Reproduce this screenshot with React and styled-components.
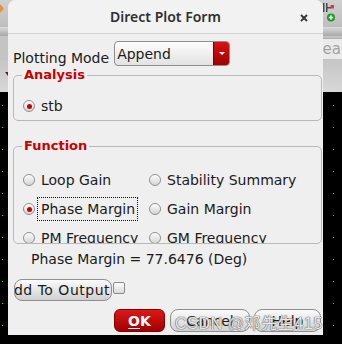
import React from 'react';
import styled, { createGlobalStyle } from 'styled-components';

const GlobalStyle = createGlobalStyle`
  html, body {
    margin: 0;
    padding: 0;
    background: #000;
  }
  body {
    font-family: 'DejaVu Sans', sans-serif;
  }
`;

const Stage = styled.div`
  position: relative;
  width: 342px;
  height: 344px;
  overflow: hidden;
  display: flex;
  flex-direction: column;
  background: #000;
`;

// desktop behind the dialog
const Toolbar = styled.div`
  height: 27px;
  background: linear-gradient(#d0d0d0, #bebebe);
  display: flex;
  justify-content: space-between;
`;

const Rule = styled.div`
  height: 9px;
  background: linear-gradient(#dadada, #a8a8a8);
`;

const SearchRow = styled.div`
  height: 24px;
  box-sizing: border-box;
  padding-top: 2px;
  background: #c4c4c4;
  display: flex;
  justify-content: flex-end;
`;

const SearchField = styled.div`
  width: 42px;
  height: 21px;
  box-sizing: border-box;
  padding-left: 13px;
  background: #ebebeb;
  border-top: 1px solid #b0b0b0;
  color: #a3a3a3;
  font: 15px/20px 'DejaVu Sans', sans-serif;
  white-space: nowrap;
  overflow: hidden;
`;

const Band = styled.div`
  height: 32px;
  background: linear-gradient(#c6c6c6, #d8d8d8);
  padding: 12px 0 0 5px;
  box-sizing: border-box;
`;

const Caret = styled.div`
  width: 0;
  height: 0;
  border-left: 3px solid transparent;
  border-right: 3px solid transparent;
  border-top: 4px solid #8a1010;
`;

const Canvas = styled.div`
  flex: 1;
  display: flex;
  justify-content: space-between;
  padding: 13px 8px 0 2px;
`;

const DotColumn = styled.div`
  width: 1px;
  background: repeating-linear-gradient(to bottom, #22dd22 0 1px, transparent 1px 22px);
`;

// the dialog window
const Dialog = styled.div`
  position: absolute;
  left: 8px;
  top: 0;
  width: 315px;
  height: 335px;
  background: #efefef;
  border-radius: 8px 8px 0 0;
  overflow: hidden;
  display: flex;
  flex-direction: column;
  color: #1b1b1b;
  font: 14px 'DejaVu Sans', sans-serif;
`;

const TitleBar = styled.div`
  height: 33px;
  background: #f2f2f2;
  border-bottom: 1px solid #d3d3d3;
  display: grid;
  grid-template-columns: 1fr auto 1fr;
  align-items: center;
`;

const Title = styled.div`
  grid-column: 2;
  font: 600 14px 'Noto Sans', sans-serif;
  color: #2f2f2f;
`;

const Close = styled.div`
  grid-column: 3;
  justify-self: end;
  margin: 3px 15px 0 0;
  display: flex;
`;

const Body = styled.div`
  padding: 0 1px 0 5px;
  display: flex;
  flex-direction: column;
`;

const PlotRow = styled.div`
  margin-top: 7px;
  display: flex;
  align-items: flex-end;
`;

const Label = styled.span`
  line-height: 16px;
  white-space: nowrap;
`;

const Select = styled.div`
  margin-left: 5px;
  width: 116px;
  height: 25px;
  box-sizing: border-box;
  border: 1px solid #8e8e8e;
  border-radius: 4px;
  background: linear-gradient(#fdfdfd, #e2e2e2);
  overflow: hidden;
  display: flex;
  align-items: center;
`;

const SelectValue = styled.span`
  flex: 1;
  padding-left: 2px;
`;

const SelectArrow = styled.span`
  align-self: stretch;
  width: 15px;
  background: linear-gradient(#d81414, #a00000);
  border-left: 1px solid #7d0000;
  display: flex;
  align-items: center;
  justify-content: center;
  &::after {
    content: '';
    border-left: 3px solid transparent;
    border-right: 3px solid transparent;
    border-top: 3px solid #fff;
  }
`;

const Group = styled.fieldset`
  margin: ${p => p.$gap}px 0 0;
  padding: 0 0 ${p => p.$pad}px 8px;
  height: ${p => p.$height}px;
  box-sizing: border-box;
  border: 1px solid #b9b9b9;
  border-radius: 5px;
  min-width: 0;
  overflow: hidden;
`;

const Legend = styled.legend`
  padding: 0 2px;
  font: bold 13px/16px 'DejaVu Sans', sans-serif;
  color: #c80000;
`;

const Options = styled.div`
  margin: ${p => p.$top}px 0 0 1px;
  display: grid;
  grid-template-columns: 126px 1fr;
  row-gap: 5px;
`;

const Option = styled.label`
  display: flex;
  align-items: center;
  height: 24px;
  white-space: nowrap;
`;

const Radio = styled.span`
  width: 12px;
  height: 12px;
  box-sizing: border-box;
  border-radius: 50%;
  border: 1px solid #8f8f8f;
  background: linear-gradient(#fafafa, #d6d6d6);
  box-shadow: inset 0 1px 0 #fff;
  display: grid;
  place-items: center;
  &::after {
    content: '';
    width: 5px;
    height: 5px;
    border-radius: 50%;
    background: ${p => (p.$checked ? '#cc0000' : 'transparent')};
  }
`;

const OptionText = styled.span`
  margin-left: 2px;
  padding: 0 2px 0 3px;
  line-height: 22px;
  border: 1px dotted ${p => (p.$focus ? '#111' : 'transparent')};
`;

const Result = styled.div`
  margin: 7px 0 0 18px;
  line-height: 16px;
`;

const AddRow = styled.div`
  margin: 12px 0 0 1px;
  display: flex;
  align-items: flex-start;
`;

const GreyButton = styled.div`
  width: ${p => p.$width}px;
  height: ${p => p.$height}px;
  box-sizing: border-box;
  border: 1px solid #8f8f8f;
  border-radius: 8px;
  background: linear-gradient(#fbfbfb, #d0d0d0);
  display: flex;
  align-items: center;
  justify-content: ${p => p.$align || 'center'};
  padding-right: ${p => (p.$align ? 1 : 0)}px;
  overflow: hidden;
  white-space: nowrap;
  letter-spacing: ${p => (p.$align ? 0.5 : 0)}px;
`;

const Checkbox = styled.span`
  margin: 3px 0 0 1px;
  width: 12px;
  height: 12px;
  box-sizing: border-box;
  border: 1px solid #8a8a8a;
  border-radius: 2px;
  background: linear-gradient(#fdfdfd, #dadada);
`;

const Actions = styled.div`
  margin: 8px 1px 0 0;
  display: flex;
  justify-content: flex-end;
  gap: 4px;
`;

const OkButton = styled.div`
  margin-right: 1px;
  width: 51px;
  height: 23px;
  box-sizing: border-box;
  border: 1px solid #850000;
  border-radius: 6px;
  background: linear-gradient(#dc1818, #a30000);
  color: #fff;
  font: bold 14px 'DejaVu Sans', sans-serif;
  display: flex;
  align-items: center;
  justify-content: center;
  u {
    text-decoration-thickness: 1px;
    text-underline-offset: 2px;
  }
`;

const Watermark = styled.div`
  position: absolute;
  left: 175px;
  top: 315px;
  font: 16px/18px 'Liberation Sans', 'Noto Sans CJK SC', sans-serif;
  letter-spacing: 0.6px;
  color: rgba(255, 255, 255, 0.85);
  text-shadow: 0 0 1px #6a6a6a, 0 0 1px #6a6a6a, 0 0 1px #888;
  white-space: nowrap;
  pointer-events: none;
`;

const functions = [
  { label: 'Loop Gain' },
  { label: 'Stability Summary' },
  { label: 'Phase Margin', checked: true, focus: true },
  { label: 'Gain Margin' },
  { label: 'PM Frequency' },
  { label: 'GM Frequency' },
];

const ToolIcon = () => (
  <svg width="19" height="27" viewBox="0 0 19 27">
    <rect x="0" y="3" width="1.5" height="9" fill="#4a4a4a" />
    <rect x="3" y="3" width="1.5" height="9" fill="#4a4a4a" />
    <rect x="3" y="7" width="5" height="1.5" fill="#4a4a4a" />
    <rect x="7.5" y="5" width="3.5" height="3.5" fill="#d83a3a" />
    <circle cx="8" cy="17.5" r="4" fill="#15a01a" />
    <path d="M8 15.3v4.4M5.8 17.5h4.4" stroke="#fff" strokeWidth="1.4" />
  </svg>
);

const App = () => (
  <>
    <GlobalStyle />
    <Stage>
      <Toolbar>
        <svg width="8" height="27" viewBox="0 0 8 27">
          <polygon points="-3,8.5 0.5,4.5 4,8.5 0.5,12.5" fill="#e8913a" />
        </svg>
        <ToolIcon />
      </Toolbar>
      <Rule />
      <SearchRow>
        <SearchField>Search</SearchField>
      </SearchRow>
      <Band>
        <Caret />
      </Band>
      <Canvas>
        <DotColumn />
        <DotColumn />
      </Canvas>

      <Dialog>
        <TitleBar>
          <Title>Direct Plot Form</Title>
          <Close>
            <svg width="8" height="8" viewBox="0 0 8 8">
              <path d="M1 1l6 6M7 1L1 7" stroke="#333" strokeWidth="1.8" />
            </svg>
          </Close>
        </TitleBar>
        <Body>
          <PlotRow>
            <Label>Plotting Mode</Label>
            <Select>
              <SelectValue>Append</SelectValue>
              <SelectArrow />
            </Select>
          </PlotRow>

          <Group $gap={1} $pad={2} $height={54}>
            <Legend>Analysis</Legend>
            <Options $top={11}>
              <Option>
                <Radio $checked />
                <OptionText>stb</OptionText>
              </Option>
            </Options>
          </Group>

          <Group $gap={17} $pad={0} $height={106}>
            <Legend>Function</Legend>
            <Options $top={14}>
              {functions.map(f => (
                <Option key={f.label}>
                  <Radio $checked={f.checked} />
                  <OptionText $focus={f.focus}>{f.label}</OptionText>
                </Option>
              ))}
            </Options>
          </Group>

          <Result>Phase Margin = 77.6476 (Deg)</Result>

          <AddRow>
            <GreyButton $width={98} $height={22} $align="flex-end">Add To Output</GreyButton>
            <Checkbox />
          </AddRow>

          <Actions>
            <OkButton><span><u>O</u>K</span></OkButton>
            <GreyButton $width={80} $height={23}>Cancel</GreyButton>
            <GreyButton $width={67} $height={23}>Help</GreyButton>
          </Actions>
        </Body>
      </Dialog>

      <Watermark>CSDN @邓先生415</Watermark>
    </Stage>
  </>
);

export default App;
